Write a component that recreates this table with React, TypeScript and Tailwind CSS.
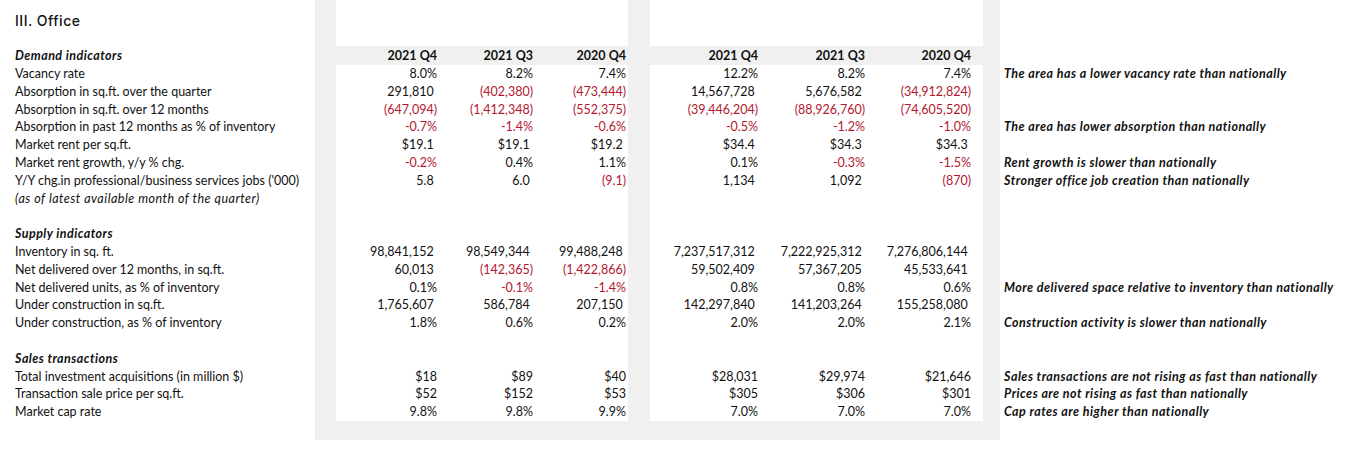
import React from "react";

type Row = {
  label: string;
  kind?: "head" | "italic" | "blank";
  a?: string[];
  b?: string[];
  c?: string;
};

const rows: Row[] = [
  { label: "Vacancy rate", a: ["8.0%", "8.2%", "7.4%"], b: ["12.2%", "8.2%", "7.4%"], c: "The area has a lower vacancy rate than nationally" },
  { label: "Absorption in sq.ft. over the quarter", a: ["291,810_", "(402,380)", "(473,444)"], b: ["14,567,728_", "5,676,582_", "(34,912,824)"] },
  { label: "Absorption in sq.ft. over 12 months", a: ["(647,094)", "(1,412,348)", "(552,375)"], b: ["(39,446,204)", "(88,926,760)", "(74,605,520)"] },
  { label: "Absorption in past 12 months as % of inventory", a: ["-0.7%", "-1.4%", "-0.6%"], b: ["-0.5%", "-1.2%", "-1.0%"], c: "The area has lower absorption than nationally" },
  { label: "Market rent per sq.ft.", a: ["$19.1_", "$19.1_", "$19.2_"], b: ["$34.4_", "$34.3_", "$34.3_"] },
  { label: "Market rent growth, y/y % chg.", a: ["-0.2%", "0.4%", "1.1%"], b: ["0.1%", "-0.3%", "-1.5%"], c: "Rent growth is slower than nationally" },
  { label: "Y/Y chg.in professional/business services jobs ('000)", a: ["5.8_", "6.0_", "(9.1)"], b: ["1,134_", "1,092_", "(870)"], c: "Stronger office job creation than nationally" },
  { label: "(as of latest available month of the quarter)", kind: "italic" },
  { label: "", kind: "blank" },
  { label: "Supply indicators", kind: "head" },
  { label: "Inventory in sq. ft.", a: ["98,841,152_", "98,549,344_", "99,488,248_"], b: ["7,237,517,312_", "7,222,925,312_", "7,276,806,144_"] },
  { label: "Net delivered over 12 months, in sq.ft.", a: ["60,013_", "(142,365)", "(1,422,866)"], b: ["59,502,409_", "57,367,205_", "45,533,641_"] },
  { label: "Net delivered units, as % of inventory", a: ["0.1%", "-0.1%", "-1.4%"], b: ["0.8%", "0.8%", "0.6%"], c: "More delivered space relative to inventory than nationally" },
  { label: "Under construction in sq.ft.", a: ["1,765,607_", "586,784_", "207,150_"], b: ["142,297,840_", "141,203,264_", "155,258,080_"] },
  { label: "Under construction, as % of inventory", a: ["1.8%", "0.6%", "0.2%"], b: ["2.0%", "2.0%", "2.1%"], c: "Construction activity is slower than nationally" },
  { label: "", kind: "blank" },
  { label: "Sales transactions", kind: "head" },
  { label: "Total investment acquisitions (in million $)", a: ["$18", "$89", "$40"], b: ["$28,031", "$29,974", "$21,646"], c: "Sales transactions are not rising as fast than nationally" },
  { label: "Transaction sale price per sq.ft.", a: ["$52", "$152", "$53"], b: ["$305", "$306", "$301"], c: "Prices are not rising as fast than nationally" },
  { label: "Market cap rate", a: ["9.8%", "9.8%", "9.9%"], b: ["7.0%", "7.0%", "7.0%"], c: "Cap rates are higher than nationally" },
];

const headers = ["2021 Q4", "2021 Q3", "2020 Q4"];
const ROW = "h-[17.8px] leading-[17.8px] whitespace-nowrap";

function Val({ v }: { v?: string }) {
  if (!v) return <span>&nbsp;</span>;
  const pad = v.endsWith("_");
  const t = pad ? v.slice(0, -1) : v;
  const red = t.startsWith("(") || t.startsWith("-");
  return (
    <span className={red ? "text-[#b3172f]" : "text-[#111]"}>
      {t}
      {pad && <span className="invisible">)</span>}
    </span>
  );
}

function Block({ widths, extra, pick }: { widths: string[]; extra: string; pick: (r: Row) => string[] | undefined }) {
  return (
    <div className="flex flex-col bg-white">
      <div className="h-[46px]" />
      <div className="flex h-[19px] bg-[#f0f0f0] font-bold text-[#111] leading-[19px]">
        {headers.map((h, i) => (
          <div key={i} className={`${widths[i]} text-right pr-[2px]`}>{h}</div>
        ))}
        <div className={extra} />
      </div>
      {rows.map((r, ri) => {
        const vals = pick(r);
        return (
          <div key={ri} className={`flex ${ROW}`}>
            {[0, 1, 2].map((i) => (
              <div key={i} className={`${widths[i]} text-right pr-[2px]`}>
                <Val v={vals?.[i]} />
              </div>
            ))}
            <div className={extra} />
          </div>
        );
      })}
    </div>
  );
}

export default function App() {
  return (
    <div className="w-[1348px] h-[457px] bg-white flex text-[12.5px] text-[#111]" style={{ fontFamily: "Lato, 'Open Sans', sans-serif" }}>
      {/* Labels */}
      <div className="w-[315px] flex flex-col pl-[15px]">
        <div className="h-[46px] pt-[10px] text-[14px] font-medium tracking-[0.5px]" style={{ fontFamily: "Inter, sans-serif" }}>
          III. Office
        </div>
        <div className="h-[19px] leading-[19px] font-bold italic tracking-[0.45px]">Demand indicators</div>
        {rows.map((r, i) => (
          <div key={i} className={`${ROW} ${r.kind === "head" ? "font-bold italic tracking-[0.45px]" : ""} ${r.kind === "italic" ? "italic tracking-[0.5px]" : ""}`}>
            {r.label || "\u00a0"}
          </div>
        ))}
      </div>

      {/* Gray panel with two white blocks */}
      <div className="self-start flex gap-[22px] bg-[#f0f0f0] pl-[21px] pr-[17px] pb-[19px]">
        <Block widths={["w-[103px]", "w-[96px]", "w-[93px]"]} extra="w-0" pick={(r) => r.a} />
        <Block widths={["w-[110px]", "w-[107px]", "w-[106px]"]} extra="w-[10px]" pick={(r) => r.b} />
      </div>

      {/* Comments */}
      <div className="flex flex-col pl-[4px] font-bold italic tracking-[0.47px] text-[#111]">
        <div className="h-[46px]" />
        <div className="h-[19px]" />
        {rows.map((r, i) => (
          <div key={i} className={ROW}>{r.c || "\u00a0"}</div>
        ))}
      </div>
    </div>
  );
}
